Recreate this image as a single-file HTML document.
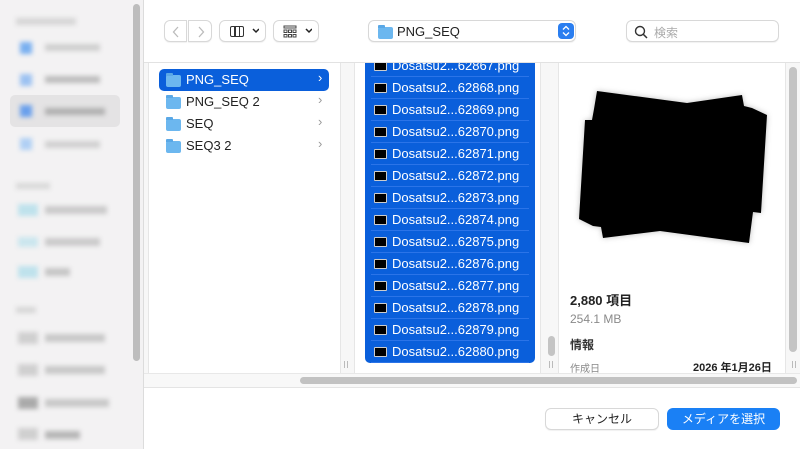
<!DOCTYPE html>
<html><head><meta charset="utf-8"><style>
*{margin:0;padding:0;box-sizing:border-box}
body{width:800px;height:449px;overflow:hidden;background:#fff;font-family:"Liberation Sans","Noto Sans CJK JP",sans-serif;position:relative}
.a{position:absolute}
.sb{left:0;top:0;width:144px;height:449px;background:#f3f2f3;border-right:1px solid #dcdcdc}
.bl{position:absolute;filter:blur(2.5px);background:#c4c4c4}
.row{position:absolute;left:0;width:170px;height:22px;color:#fff;font-size:13px;line-height:22px}
.row .ic{position:absolute;left:9px;top:6px;width:13px;height:10px;background:#000;border:1px solid #ccc;border-radius:1px}
.row span{position:absolute;left:27px}
.row:after{content:"";position:absolute;left:6px;right:6px;bottom:0;height:1px;background:#2b74e8}
.fold{position:absolute;width:15px;height:12px;background:#6cb7ef;border-radius:2px}
.fold:before{content:"";position:absolute;left:0;top:-2px;width:7px;height:3px;background:#5aa8e6;border-radius:1px 1px 0 0}
.f1{position:absolute;left:186px;font-size:13px;color:#222}
.chev{position:absolute;left:318px;font-size:13px;color:#999}
.btn{border:1px solid #d8d8d8;border-radius:6px;background:#fff;box-shadow:0 1px 1px rgba(0,0,0,.06)}
.dd{position:absolute;top:6px;width:7px;height:7px}
</style></head><body>
<div class="a sb">
 <div class="bl" style="left:16px;top:18px;width:60px;height:7px;background:#d6d6d6"></div>
 <div class="bl" style="left:20px;top:42px;width:12px;height:12px;background:#7ab0f0"></div><div class="bl" style="left:45px;top:44px;width:55px;height:7px;background:#cfcfcf"></div>
 <div class="bl" style="left:20px;top:74px;width:12px;height:12px;background:#9cc2f2"></div><div class="bl" style="left:45px;top:76px;width:55px;height:7px;background:#bdbdbd"></div>
 <div style="position:absolute;left:10px;top:95px;width:110px;height:32px;background:#e4e3e4;border-radius:5px"></div>
 <div class="bl" style="left:20px;top:105px;width:12px;height:12px;background:#6aa0ec"></div><div class="bl" style="left:45px;top:108px;width:60px;height:7px;background:#b0b0b0"></div>
 <div class="bl" style="left:20px;top:138px;width:12px;height:12px;background:#b0d0f4"></div><div class="bl" style="left:45px;top:141px;width:55px;height:7px;background:#d0d0d0"></div>
 <div class="bl" style="left:16px;top:183px;width:34px;height:6px;background:#d8d8d8"></div>
 <div class="bl" style="left:18px;top:204px;width:20px;height:12px;background:#bfe2ec"></div><div class="bl" style="left:45px;top:206px;width:62px;height:8px;background:#cacaca"></div>
 <div class="bl" style="left:18px;top:237px;width:20px;height:10px;background:#cbe6ee"></div><div class="bl" style="left:45px;top:238px;width:55px;height:8px;background:#cacaca"></div>
 <div class="bl" style="left:18px;top:266px;width:20px;height:12px;background:#bfe2ec"></div><div class="bl" style="left:45px;top:268px;width:25px;height:8px;background:#c6c6c6"></div>
 <div class="bl" style="left:16px;top:307px;width:20px;height:6px;background:#d6d6d6"></div>
 <div class="bl" style="left:18px;top:332px;width:20px;height:12px;background:#d0d0d0"></div><div class="bl" style="left:45px;top:334px;width:60px;height:8px;background:#c8c8c8"></div>
 <div class="bl" style="left:18px;top:364px;width:20px;height:12px;background:#d0d0d0"></div><div class="bl" style="left:45px;top:366px;width:60px;height:8px;background:#c8c8c8"></div>
 <div class="bl" style="left:18px;top:397px;width:20px;height:12px;background:#aaaaaa"></div><div class="bl" style="left:45px;top:399px;width:64px;height:8px;background:#c8c8c8"></div>
 <div class="bl" style="left:18px;top:428px;width:20px;height:12px;background:#d0d0d0"></div><div class="bl" style="left:45px;top:431px;width:35px;height:8px;background:#b6b6b6"></div>
 <div style="position:absolute;left:133px;top:4px;width:7px;height:357px;background:#bdbdbd;border-radius:4px"></div>
</div>
<!-- toolbar -->
<div class="a btn" style="left:164px;top:20px;width:23px;height:22px;border-radius:6px 0 0 6px"><svg class="a" style="left:7px;top:5px" width="8" height="12"><path d="M6 1L1.5 6L6 11" fill="none" stroke="#bbb" stroke-width="1.3"/></svg></div>
<div class="a btn" style="left:188px;top:20px;width:24px;height:22px;border-radius:0 6px 6px 0"><svg class="a" style="left:8px;top:5px" width="8" height="12"><path d="M2 1L6.5 6L2 11" fill="none" stroke="#bbb" stroke-width="1.3"/></svg></div>
<div class="a btn" style="left:219px;top:20px;width:47px;height:22px">
 <div class="a" style="left:10px;top:5px;width:14px;height:11px;border:1.5px solid #333;border-radius:2px"></div>
 <div class="a" style="left:14px;top:6px;width:1.5px;height:9px;background:#333"></div><div class="a" style="left:18.5px;top:6px;width:1.5px;height:9px;background:#333"></div>
 <svg class="dd" style="left:32px;top:7px" width="8" height="6"><path d="M1 1L4 4L7 1" fill="none" stroke="#222" stroke-width="1.5"/></svg>
</div>
<div class="a btn" style="left:273px;top:20px;width:46px;height:22px">
 <svg class="a" style="left:9px;top:4px" width="14" height="13"><g fill="none" stroke="#444" stroke-width="1"><rect x="1" y="1" width="12" height="2"/><rect x="1" y="5" width="3" height="2.5"/><rect x="5.5" y="5" width="3" height="2.5"/><rect x="10" y="5" width="3" height="2.5"/><rect x="1" y="9.5" width="3" height="2.5"/><rect x="5.5" y="9.5" width="3" height="2.5"/><rect x="10" y="9.5" width="3" height="2.5"/></g></svg>
 <svg class="dd" style="left:31px;top:7px" width="8" height="6"><path d="M1 1L4 4L7 1" fill="none" stroke="#222" stroke-width="1.5"/></svg>
</div>
<div class="a btn" style="left:368px;top:20px;width:208px;height:22px">
 <div class="fold" style="left:9px;top:6px"></div>
 <div class="a" style="left:28px;top:3px;font-size:13px;color:#222">PNG_SEQ</div>
 <div class="a" style="left:189px;top:2px;width:16px;height:16px;background:#2a7ef0;border-radius:4px"><svg class="a" style="left:4px;top:2px" width="8" height="12"><path d="M1 4.5L4 1.5L7 4.5M1 7.5L4 10.5L7 7.5" fill="none" stroke="#fff" stroke-width="1.3"/></svg></div>
</div>
<div class="a btn" style="left:626px;top:20px;width:153px;height:22px">
 <svg class="a" style="left:7px;top:4px" width="14" height="14"><circle cx="6" cy="6" r="4.5" fill="none" stroke="#333" stroke-width="1.4"/><line x1="9.3" y1="9.3" x2="13" y2="13" stroke="#333" stroke-width="1.5"/></svg>
 <div class="a" style="left:27px;top:3px;font-size:12px;color:#aaa">検索</div>
</div>
<div class="a" style="left:144px;top:62px;width:656px;height:1px;background:#e2e2e2"></div>
<!-- columns -->
<div class="a" style="left:144px;top:63px;width:5px;height:310px;background:#f7f7f7;border-right:1px solid #e6e6e6"></div>
<div class="a" style="left:340px;top:63px;width:15px;height:310px;background:#f7f7f7;border-left:1px solid #e6e6e6;border-right:1px solid #e6e6e6"></div>
<div class="a" style="left:344px;top:361px;width:1px;height:7px;background:#bbb"></div><div class="a" style="left:347px;top:361px;width:1px;height:7px;background:#bbb"></div>
<div class="a" style="left:540px;top:63px;width:19px;height:310px;background:#f7f7f7;border-left:1px solid #e6e6e6;border-right:1px solid #e6e6e6"></div>
<div class="a" style="left:548px;top:336px;width:7px;height:20px;background:#c4c4c4;border-radius:4px"></div>
<div class="a" style="left:549px;top:361px;width:1px;height:7px;background:#bbb"></div><div class="a" style="left:552px;top:361px;width:1px;height:7px;background:#bbb"></div>
<div class="a" style="left:785px;top:63px;width:15px;height:310px;background:#f7f7f7;border-left:1px solid #e6e6e6"></div>
<div class="a" style="left:789px;top:67px;width:8px;height:285px;background:#c4c4c4;border-radius:4px"></div>
<div class="a" style="left:792px;top:361px;width:1px;height:7px;background:#bbb"></div><div class="a" style="left:795px;top:361px;width:1px;height:7px;background:#bbb"></div>
<!-- column 1 -->
<div class="a" style="left:159px;top:69px;width:170px;height:22px;background:#0a5fdb;border-radius:5px"></div>
<div class="fold" style="left:166px;top:75px"></div><div class="f1" style="top:72px;color:#fff">PNG_SEQ</div><div class="chev" style="top:70px;color:#fff">&#8250;</div>
<div class="fold" style="left:166px;top:97px"></div><div class="f1" style="top:94px">PNG_SEQ 2</div><div class="chev" style="top:92px">&#8250;</div>
<div class="fold" style="left:166px;top:119px"></div><div class="f1" style="top:116px">SEQ</div><div class="chev" style="top:114px">&#8250;</div>
<div class="fold" style="left:166px;top:141px"></div><div class="f1" style="top:138px">SEQ3 2</div><div class="chev" style="top:136px">&#8250;</div>
<!-- column 2 -->
<div class="a" style="left:365px;top:63px;width:170px;height:300px;background:#0a5fdb;border-radius:0 0 5px 5px;overflow:hidden">
 <div class="row" style="top:-8px"><div class="ic"></div><span>Dosatsu2...62867.png</span></div>
 <div class="row" style="top:14px"><div class="ic"></div><span>Dosatsu2...62868.png</span></div>
 <div class="row" style="top:36px"><div class="ic"></div><span>Dosatsu2...62869.png</span></div>
 <div class="row" style="top:58px"><div class="ic"></div><span>Dosatsu2...62870.png</span></div>
 <div class="row" style="top:80px"><div class="ic"></div><span>Dosatsu2...62871.png</span></div>
 <div class="row" style="top:102px"><div class="ic"></div><span>Dosatsu2...62872.png</span></div>
 <div class="row" style="top:124px"><div class="ic"></div><span>Dosatsu2...62873.png</span></div>
 <div class="row" style="top:146px"><div class="ic"></div><span>Dosatsu2...62874.png</span></div>
 <div class="row" style="top:168px"><div class="ic"></div><span>Dosatsu2...62875.png</span></div>
 <div class="row" style="top:190px"><div class="ic"></div><span>Dosatsu2...62876.png</span></div>
 <div class="row" style="top:212px"><div class="ic"></div><span>Dosatsu2...62877.png</span></div>
 <div class="row" style="top:234px"><div class="ic"></div><span>Dosatsu2...62878.png</span></div>
 <div class="row" style="top:256px"><div class="ic"></div><span>Dosatsu2...62879.png</span></div>
 <div class="row" style="top:278px"><div class="ic"></div><span>Dosatsu2...62880.png</span></div>
</div>
<!-- preview -->
<svg class="a" style="left:0;top:0;filter:drop-shadow(0 0 3px rgba(0,0,0,.25))" width="800" height="449"><polygon fill="#000" points="597,91 687,103 742,95 744,106 752,108 767,115 761,213 753,212 749,243 660,231 603,238 601,227 593,226 579,219 585,120 592,120 594,109"/></svg>
<div class="a" style="left:570px;top:290px;font-size:13px;font-weight:bold;color:#222">2,880 項目</div>
<div class="a" style="left:570px;top:312px;font-size:12px;color:#8a8a8a">254.1 MB</div>
<div class="a" style="left:570px;top:336px;font-size:12px;font-weight:bold;color:#333">情報</div>
<div class="a" style="left:570px;top:360px;font-size:10px;color:#888">作成日</div>
<div class="a" style="left:693px;top:359px;font-size:11px;font-weight:bold;color:#222">2026 年1月26日</div>
<!-- h scroll -->
<div class="a" style="left:144px;top:373px;width:656px;height:15px;background:#f8f8f8;border-top:1px solid #e8e8e8;border-bottom:1px solid #e4e4e4"></div>
<div class="a" style="left:300px;top:377px;width:497px;height:7px;background:#c2c2c2;border-radius:4px"></div>
<!-- buttons -->
<div class="a btn" style="left:545px;top:408px;width:114px;height:22px;font-size:12px;color:#222;text-align:center;line-height:20px">キャンセル</div>
<div class="a" style="left:667px;top:408px;width:113px;height:22px;background:#1a80f5;border-radius:6px;font-size:12px;color:#fff;text-align:center;line-height:22px">メディアを選択</div>
</body></html>
